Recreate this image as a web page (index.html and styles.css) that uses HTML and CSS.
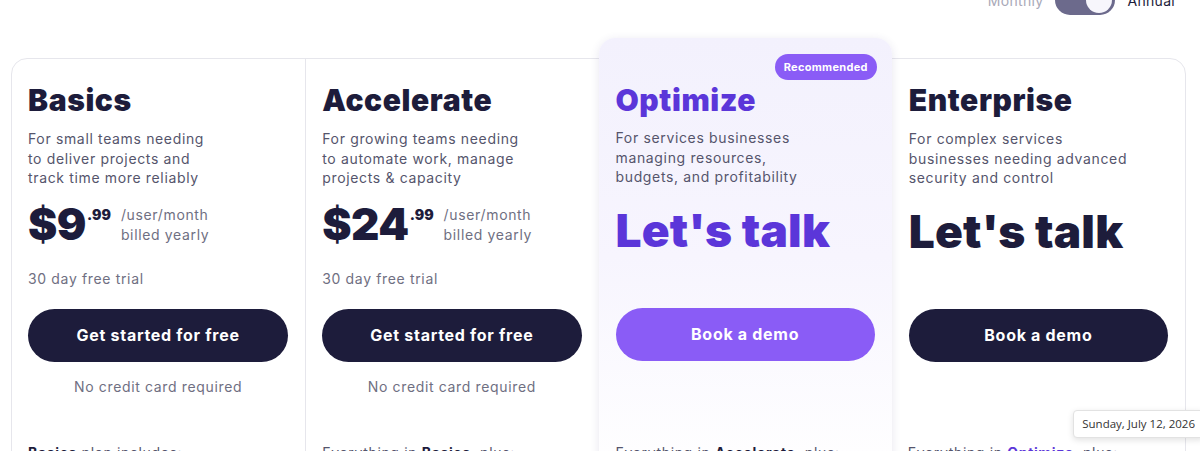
FILE: index.html
```html
<!DOCTYPE html>
<html lang="en">
<head>
  <meta charset="UTF-8"/>
  <meta name="viewport" content="width=device-width, initial-scale=1.0"/>
  <title>Pricing</title>
  <link rel="stylesheet" href="styles.css">
</head>
<body>
  <div class="billing">
    <span class="billing-label">Monthly</span>
    <span class="switch"><span class="knob"></span></span>
    <span class="billing-label active">Annual</span>
  </div>

  <div class="plans">
    <div class="plan">
      <h2>Basics</h2>
      <p class="desc">For small teams needing<br>to deliver projects and<br>track time more reliably</p>
      <div class="price">
        <span class="amount">$9</span><span class="cents">.99</span>
        <span class="per">/user/month<br>billed yearly</span>
      </div>
      <p class="trial">30 day free trial</p>
      <button class="cta">Get started for free</button>
      <p class="note">No credit card required</p>
      <p class="includes"><b>Basics</b> plan includes:</p>
    </div>

    <div class="plan">
      <h2>Accelerate</h2>
      <p class="desc">For growing teams needing<br>to automate work, manage<br>projects &amp; capacity</p>
      <div class="price">
        <span class="amount">$24</span><span class="cents">.99</span>
        <span class="per">/user/month<br>billed yearly</span>
      </div>
      <p class="trial">30 day free trial</p>
      <button class="cta">Get started for free</button>
      <p class="note">No credit card required</p>
      <p class="includes">Everything in <b>Basics</b>, plus:</p>
    </div>

    <div class="plan featured">
      <span class="badge">Recommended</span>
      <h2>Optimize</h2>
      <p class="desc">For services businesses<br>managing resources,<br>budgets, and profitability</p>
      <div class="talk">Let's talk</div>
      <button class="cta">Book a demo</button>
      <p class="includes">Everything in <b>Accelerate</b>, plus:</p>
    </div>

    <div class="plan">
      <h2>Enterprise</h2>
      <p class="desc">For complex services<br>businesses needing advanced<br>security and control</p>
      <div class="talk">Let's talk</div>
      <button class="cta">Book a demo</button>
      <p class="includes">Everything in <b class="purple">Optimize</b>, plus:</p>
    </div>
  </div>

  <div class="tooltip">Sunday, July 12, 2026</div>
</body>
</html>
```

FILE: styles.css
```css
:root {
  --navy: #1d1c3b;
  --text: #55556c;
  --muted: #6f6f82;
  --purple: #5b36d9;
  --purple-btn: #8a5cf6;
  --line: #e6e6ec;
}

* {
  box-sizing: border-box;
  margin: 0;
  padding: 0;
}

body {
  font-family: 'Inter', sans-serif;
  background: #fff;
  color: var(--navy);
  overflow: hidden;
  height: 451px;
  position: relative;
}

/* billing period toggle, partly scrolled off the top */
.billing {
  display: flex;
  justify-content: flex-end;
  align-items: center;
  gap: 12px;
  margin-top: -15px;
  padding-right: 25px;
  height: 30px;
}

.billing-label {
  font-size: 14px;
  color: #a9a9b8;
  letter-spacing: 0.3px;
}

.billing-label.active {
  color: var(--navy);
}

.switch {
  width: 60px;
  height: 30px;
  border-radius: 15px;
  background: #6c6a8c;
  display: flex;
  align-items: center;
  justify-content: flex-end;
  padding: 3px;
}

.knob {
  width: 26px;
  height: 26px;
  border-radius: 50%;
  background: #f7f6fc;
}

.plans {
  display: grid;
  grid-template-columns: repeat(4, 1fr);
  margin: 43px 14px 0 11px;
  border: 1px solid var(--line);
  border-radius: 16px;
  height: 420px;
}

.plan {
  padding: 23px 17px 0 16px;
  border-left: 1px solid var(--line);
  position: relative;
}

.plan:first-child {
  border-left: none;
}

.plan.featured {
  margin: -21px 0 0;
  padding-top: 44px;
  padding-left: 17px;
  border: none;
  border-radius: 16px;
  background: linear-gradient(180deg, #f3f1fd 0%, #f7f5fe 50%, #ffffff 100%);
  box-shadow: 0 2px 10px rgba(60, 50, 120, 0.12);
  z-index: 1;
}

.plan.featured + .plan {
  border-left: none;
  padding-left: 17px;
}

h2 {
  font-size: 30px;
  font-weight: 900;
  line-height: 36px;
  letter-spacing: 0.6px;
}

.featured h2 {
  color: var(--purple);
}

.desc {
  margin-top: 11px;
  font-size: 14px;
  line-height: 19.5px;
  color: var(--text);
  letter-spacing: 0.65px;
}

.featured .desc {
  margin-top: 10px;
}

.price {
  display: flex;
  align-items: flex-start;
  margin-top: 12px;
  height: 52px;
}

.amount {
  font-size: 44px;
  font-weight: 900;
  line-height: 48px;
  letter-spacing: -0.5px;
}

.cents {
  font-size: 14px;
  font-weight: 900;
  margin-top: 6px;
  margin-left: 1px;
}

.per {
  margin-left: 10px;
  margin-top: 5px;
  font-size: 14px;
  line-height: 20px;
  color: var(--muted);
  letter-spacing: 0.65px;
}

.trial {
  margin-top: 18px;
  font-size: 14px;
  color: var(--muted);
  letter-spacing: 0.65px;
}

.cta {
  display: block;
  width: 100%;
  height: 53px;
  border: none;
  border-radius: 27px;
  background: var(--navy);
  color: #fff;
  font-family: 'Inter', sans-serif;
  font-size: 16px;
  font-weight: 700;
  letter-spacing: 0.7px;
  margin-top: 22px;
}

.featured .cta {
  background: var(--purple-btn);
}

.talk {
  margin-top: 15px;
  font-size: 46px;
  font-weight: 900;
  line-height: 56px;
  letter-spacing: 0.2px;
  height: 106px;
}

.featured .talk {
  color: var(--purple);
}

.talk + .cta {
  margin-top: 0;
}

.note {
  margin-top: 16px;
  text-align: center;
  font-size: 14px;
  color: var(--muted);
  letter-spacing: 0.65px;
}

.includes {
  position: absolute;
  top: 385px;
  left: 16px;
  font-size: 14px;
  color: var(--text);
  letter-spacing: 0.65px;
}

.featured .includes {
  top: 406px;
  left: 17px;
}

.includes b {
  color: var(--navy);
}

.includes b.purple {
  color: var(--purple);
}

.badge {
  position: absolute;
  top: 16px;
  right: 15px;
  background: var(--purple-btn);
  color: #fff;
  font-size: 11px;
  font-weight: 700;
  letter-spacing: 0.3px;
  line-height: 14px;
  padding: 6px 9px;
  border-radius: 13px;
}

/* browser hover tooltip over the bottom-right corner */
.tooltip {
  position: absolute;
  right: -4px;
  top: 410px;
  background: #fff;
  border: 1px solid #e2e2e2;
  border-radius: 4px;
  box-shadow: 0 2px 6px rgba(0, 0, 0, 0.12);
  font-family: 'Open Sans', sans-serif;
  font-size: 11.5px;
  color: #333;
  padding: 5px 8px 6px;
  z-index: 5;
}
```
